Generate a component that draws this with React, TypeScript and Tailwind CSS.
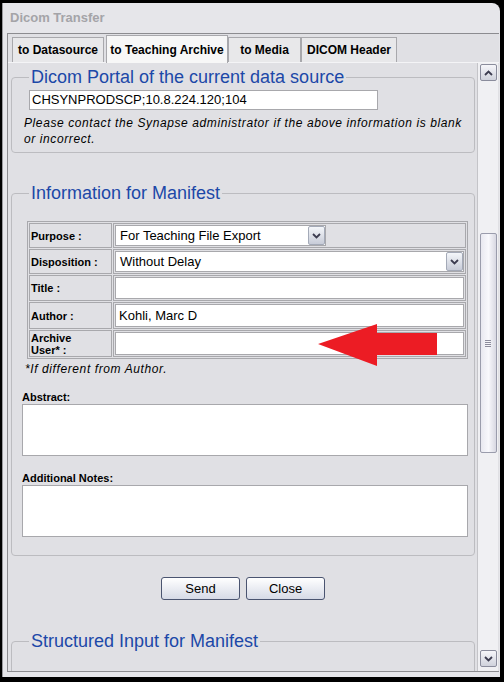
import React from "react";

const Chevron = ({ up = false }: { up?: boolean }) => (
  <svg width="9" height="6" viewBox="0 0 9 6" className={up ? "rotate-180" : ""}>
    <path d="M1 1 L4.5 4.5 L8 1" fill="none" stroke="#3c3c50" strokeWidth="1.8" />
  </svg>
);

const DropButton = () => (
  <div className="w-[17px] h-[19px] flex items-center justify-center rounded-[2px] border border-[#a4aab8] bg-gradient-to-b from-[#f4f6fa] to-[#c8ccd8]">
    <Chevron />
  </div>
);

const Tab = ({ label, width, active = false }: { label: string; width: string; active?: boolean }) => (
  <div
    className={
      (active
        ? "h-[28px] bg-[#f7f7f7] -mb-px relative z-10 "
        : "h-[25px] bg-[#e8e8ea] ") +
      width +
      " shrink-0 flex items-center justify-center border-t border-l border-r border-[#a8a8ac] text-[12px] font-bold text-black"
    }
  >
    {label}
  </div>
);

const Legend = ({ children }: { children: React.ReactNode }) => (
  <legend className="ml-[17px] px-[2px] text-[18px] leading-[20px] text-[#1c48a8]">{children}</legend>
);

const Row = ({ label, children }: { label: React.ReactNode; children: React.ReactNode }) => (
  <tr>
    <td className="h-[24px] border border-[#a8a8ac] bg-[#e0e0e4] pl-[1px] text-[11px] font-bold leading-[12px] align-middle">
      {label}
    </td>
    <td className="h-[24px] border border-[#a8a8ac] p-px align-middle">{children}</td>
  </tr>
);

export default function App() {
  return (
    <div className="relative w-[504px] h-[682px] bg-black pt-[3px] pl-[2px] overflow-hidden font-['Liberation_Sans',Arial,sans-serif]">
      <div className="w-[498px] h-[674px] bg-[#e6e6ea] rounded-tr-[8px] border-l border-[#9a9a9e] flex flex-col overflow-hidden">
        {/* title bar */}
        <div className="h-[30px] shrink-0 flex items-center pl-[7px] text-[13px] font-bold text-[#a4a4a8]">Dicom Transfer</div>

        {/* frame */}
        <div className="ml-[4px] mr-[1px] mb-[5px] flex-1 min-h-0 border-t border-l border-b border-[#8c8c90] flex flex-col overflow-hidden">
          {/* tab strip */}
          <div className="h-[29px] shrink-0 flex items-end pl-[4px] bg-[#e0e0e4] border-b border-[#f4f4f6]">
            <Tab label="to Datasource" width="w-[92px]" />
            <div className="w-[2px] shrink-0" />
            <Tab label="to Teaching Archive" width="w-[122px]" active />
            <Tab label="to Media" width="w-[73px]" />
            <Tab label="DICOM Header" width="w-[96px]" />
          </div>

          <div className="flex-1 min-h-0 flex bg-[#e0e0e4]">
            {/* scrolling content */}
            <div className="w-[469px] shrink-0 pt-[4px] pl-[3px] overflow-hidden">
              <fieldset className="w-[464px] border border-[#bcbcc0] rounded-[4px]">
                <Legend>Dicom Portal of the current data source</Legend>
                <div className="pl-[17px] pb-[5px]">
                  <div className="mt-[3px] w-[349px] h-[20px] bg-white border border-[#a8a8ac] pl-[2px] text-[13px] leading-[18px] text-black">
                    CHSYNPRODSCP;10.8.224.120;104
                  </div>
                  <p className="mt-[5px] -ml-[5px] w-[445px] text-[12px] tracking-[0.6px] leading-[16px] italic font-light text-black">
                    Please contact the Synapse administrator if the above information is blank or incorrect.
                  </p>
                </div>
              </fieldset>

              <fieldset className="mt-[30px] w-[464px] border border-[#bcbcc0] rounded-[4px]">
                <Legend>Information for Manifest</Legend>
                <div className="pl-[10px] pb-[18px]">
                  <table className="mt-[18px] ml-[5px] w-[441px] table-fixed border-separate border-spacing-px border border-[#a8a8ac]">
                    <colgroup>
                      <col className="w-[83px]" />
                      <col />
                    </colgroup>
                    <tbody>
                      <Row label="Purpose :">
                        <div className="flex items-center w-[211px] h-[21px] bg-white border border-[#a8a8ac]">
                          <span className="flex-1 pl-[4px] text-[13px]">For Teaching File Export</span>
                          <DropButton />
                        </div>
                      </Row>
                      <Row label="Disposition :">
                        <div className="flex items-center h-[21px] bg-white border border-[#a8a8ac]">
                          <span className="flex-1 pl-[4px] text-[13px]">Without Delay</span>
                          <DropButton />
                        </div>
                      </Row>
                      <Row label="Title :">
                        <div className="h-[22px] bg-white border border-[#a8a8ac]" />
                      </Row>
                      <Row label="Author :">
                        <div className="h-[23px] bg-white border border-[#a8a8ac] pl-[3px] text-[13px] leading-[21px]">Kohli, Marc D</div>
                      </Row>
                      <Row
                        label={
                          <>
                            Archive
                            <br />
                            User* :
                          </>
                        }
                      >
                        <div className="h-[23px] bg-white border border-[#a8a8ac]" />
                      </Row>
                    </tbody>
                  </table>
                  <p className="mt-[3px] ml-[3px] text-[12px] tracking-[0.6px] leading-[14px] italic">*If different from Author.</p>

                  <div className="mt-[14px] text-[11px] font-bold leading-[14px]">Abstract:</div>
                  <div className="w-[446px] h-[52px] bg-white border border-[#a8a8ac]" />
                  <div className="mt-[15px] text-[11px] font-bold leading-[14px]">Additional Notes:</div>
                  <div className="w-[446px] h-[52px] bg-white border border-[#a8a8ac]" />
                </div>
              </fieldset>

              <div className="mt-[21px] flex justify-center gap-[6px] pr-[2px]">
                <button className="w-[79px] h-[23px] rounded-[3px] border border-[#4a5470] bg-gradient-to-b from-white to-[#d6dae6] text-[13px]">
                  Send
                </button>
                <button className="w-[79px] h-[23px] rounded-[3px] border border-[#4a5470] bg-gradient-to-b from-white to-[#d6dae6] text-[13px]">
                  Close
                </button>
              </div>

              <fieldset className="mt-[31px] w-[464px] h-[60px] border border-[#bcbcc0] rounded-[4px]">
                <Legend>Structured Input for Manifest</Legend>
              </fieldset>
            </div>

            {/* scrollbar */}
            <div className="w-[21px] shrink-0 bg-[#f0f0f3] border-l border-[#c4c4c8] flex flex-col items-center pb-[4px]">
              <div className="mt-[1px] shrink-0 w-[17px] h-[17px] rounded-[2px] border border-[#8a8c9c] bg-gradient-to-b from-[#f6f6fa] to-[#d0d2dc] flex items-center justify-center">
                <Chevron up />
              </div>
              <div className="mt-[152px] shrink-0 w-[17px] h-[220px] rounded-[2px] border border-[#9a9cac] bg-gradient-to-r from-[#e8e8f0] via-[#f8f8fc] to-[#d8d8e2] flex flex-col items-center justify-center gap-[1px]">
                <div className="w-[6px] h-px bg-[#8c8c9c]" />
                <div className="w-[6px] h-px bg-[#8c8c9c]" />
                <div className="w-[6px] h-px bg-[#8c8c9c]" />
                <div className="w-[6px] h-px bg-[#8c8c9c]" />
              </div>
              <div className="flex-1" />
              <div className="shrink-0 w-[17px] h-[17px] rounded-[2px] border border-[#8a8c9c] bg-gradient-to-b from-[#f6f6fa] to-[#d0d2dc] flex items-center justify-center">
                <Chevron />
              </div>
            </div>
          </div>
        </div>
      </div>

      {/* red pointer arrow drawn over the form */}
      <svg className="absolute left-[318px] top-[323px]" width="120" height="44" viewBox="0 0 120 44">
        <polygon points="0,21 59,1 59,10 119,10 119,32 59,32 59,43" fill="#ec1c24" />
      </svg>
    </div>
  );
}
